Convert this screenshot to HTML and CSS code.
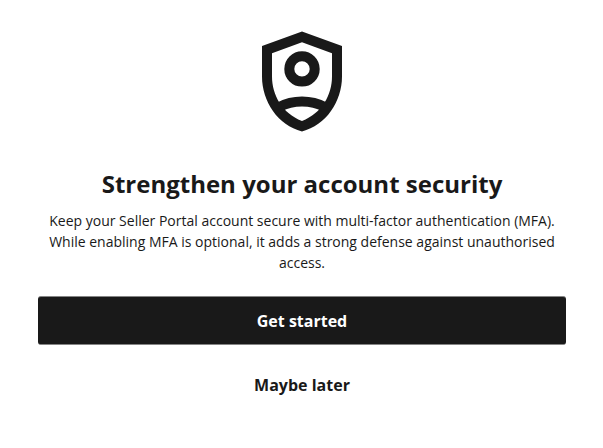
FILE: index.html
```html
<!DOCTYPE html>
<html lang="en">
<head>
    <meta charset="UTF-8">
    <title>Strengthen your account security</title>
    <link rel="stylesheet" href="styles.css">
</head>
<body>
    <main class="mfa-prompt">
        <svg class="shield-icon" viewBox="0 0 80 101" aria-hidden="true">
            <path class="shield" fill-rule="evenodd" d="M40 .6 L80 15.100 V45.600 C80 70.600 64 94.600 40 100.400 C16 94.600 0 70.600 0 45.600 V15.100 Z M40 11.200 L10 22.200 V45.600 C10 63.600 20 82.600 40 90 C60 82.600 70 63.600 70 45.600 V22.200 Z"/>
            <circle class="person" cx="40" cy="37.900" r="12.700"/>
            <path class="person" d="M17 76.100 C31 68.600 49 68.600 63 76.100"/>
        </svg>
        <h1 class="title">Strengthen your account security</h1>
        <p class="description">Keep your Seller Portal account secure with multi-factor authentication (MFA). While enabling MFA is optional, it adds a strong defense against unauthorised access.</p>
        <button class="btn btn-primary">Get started</button>
        <button class="btn btn-link">Maybe later</button>
    </main>
</body>
</html>
```

FILE: styles.css
```css
body {
    margin: 0;
    background-color: #fff;
    color: #191919;
    font-family: "Open Sans", sans-serif;
}

.mfa-prompt {
    display: flex;
    flex-direction: column;
    align-items: center;
    padding: 31px 37px 0 38px;
    text-align: center;
}

.shield-icon {
    width: 80px;
    height: 101px;
}

.shield-icon .shield {
    fill: #191919;
}

.shield-icon .person {
    fill: none;
    stroke: #191919;
    stroke-width: 10;
}

.title {
    margin: 35px 0 0;
    font-size: 24px;
    line-height: 34px;
    font-weight: 700;
}

.description {
    margin: 9px 0 0;
    font-size: 14px;
    line-height: 21px;
}

.btn {
    box-sizing: border-box;
    width: 100%;
    height: 48px;
    padding: 0;
    border: none;
    border-radius: 3px;
    font-family: inherit;
    font-size: 16px;
    font-weight: 700;
    cursor: pointer;
}

.btn-primary {
    height: 49px;
    margin-top: 23px;
    padding-top: 1px;
    border: solid #858585;
    border-width: 1px 0;
    background-color: #191919;
    color: #fff;
}

.btn-link {
    margin-top: 16px;
    background: none;
    color: #191919;
}
```
